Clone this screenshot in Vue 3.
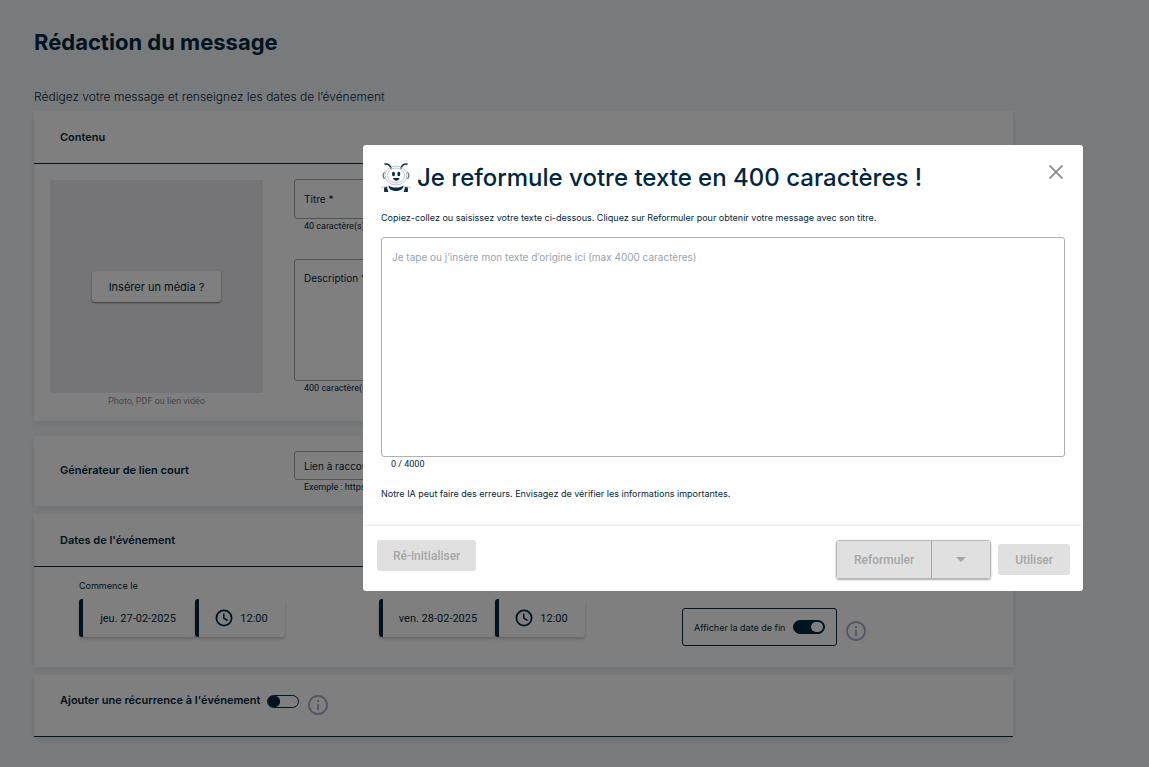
<script setup>
import { ref } from 'vue'

const titre = ref('')
const description = ref('')
const lien = ref('')
const origine = ref('')
const afficherFin = ref(true)
const recurrence = ref(false)
const dates = [
  { id: 'debut', label: 'Commence le', jour: 'jeu. 27-02-2025', heure: '12:00' },
  { id: 'fin', label: '', jour: 'ven. 28-02-2025', heure: '12:00' },
]
</script>

<template>
  <div class="screen">
    <main class="page">
      <h1>Rédaction du message</h1>
      <p class="intro">Rédigez votre message et renseignez les dates de l’événement</p>

      <section class="card content-card">
        <h2 class="card-head">Contenu</h2>
        <div class="content-body">
          <div class="media">
            <div class="media-box">
              <button type="button" class="media-btn">Insérer un média ?</button>
            </div>
            <small>Photo, PDF ou lien vidéo</small>
          </div>
          <div class="fields">
            <div class="field-group">
              <div class="field title-field">
                <label for="titre">Titre *</label>
                <input id="titre" v-model="titre" type="text" />
              </div>
              <span class="hint">40 caractère(s) restant(s)</span>
            </div>
            <div class="field-group">
              <div class="field desc-field">
                <label for="description">Description *</label>
                <textarea id="description" v-model="description"></textarea>
              </div>
              <span class="hint">400 caractère(s) restant(s)</span>
            </div>
          </div>
        </div>
      </section>

      <section class="card link-card">
        <h2>Générateur de lien court</h2>
        <div class="field-group">
          <div class="field link-field">
            <label for="lien">Lien à raccourcir</label>
            <input id="lien" v-model="lien" type="text" />
          </div>
          <span class="hint">Exemple : https://</span>
        </div>
      </section>

      <section class="card dates-card">
        <h2 class="card-head">Dates de l'événement</h2>
        <div class="dates-body">
          <div class="dates">
            <div v-for="d in dates" :key="d.id" class="date">
              <span class="date-label">{{ d.label }}</span>
              <div class="pickers">
                <button type="button" class="picker day">{{ d.jour }}</button>
                <button type="button" class="picker hour">
                  <svg width="20" height="20" viewBox="0 0 20 20" fill="none" stroke="currentColor" stroke-width="1.8">
                    <circle cx="10" cy="10" r="7.6" />
                    <path d="M9.8 5.5V10.2L13.6 12.5" stroke-width="1.5" />
                  </svg>
                  {{ d.heure }}
                </button>
              </div>
            </div>
          </div>
          <div class="end-option">
            <label class="end-box">
              Afficher la date de fin
              <input v-model="afficherFin" class="switch" type="checkbox" />
            </label>
            <svg class="info" width="24" height="24" viewBox="0 0 24 24" fill="currentColor">
              <path d="M11 7h2v2h-2zm0 4h2v6h-2zm1-9C6.480 2 2 6.480 2 12s4.480 10 10 10 10-4.480 10-10S17.520 2 12 2zm0 18c-4.410 0-8-3.590-8-8s3.590-8 8-8 8 3.590 8 8-3.590 8-8 8z" />
            </svg>
          </div>
        </div>
      </section>

      <section class="card recur-card">
        <h2><label for="recurrence">Ajouter une récurrence à l'événement</label></h2>
        <input id="recurrence" v-model="recurrence" class="switch" type="checkbox" />
        <svg class="info" width="24" height="24" viewBox="0 0 24 24" fill="currentColor">
          <path d="M11 7h2v2h-2zm0 4h2v6h-2zm1-9C6.480 2 2 6.480 2 12s4.480 10 10 10 10-4.480 10-10S17.520 2 12 2zm0 18c-4.410 0-8-3.590-8-8s3.590-8 8-8 8 3.590 8 8-3.590 8-8 8z" />
        </svg>
      </section>
    </main>

    <div class="overlay">
      <div class="dialog" role="dialog" aria-modal="true" aria-labelledby="dialog-title">
        <div class="dialog-body">
          <header>
            <svg class="bee" width="30" height="32" viewBox="0 0 30 32" fill="none">
              <g stroke="#0b2b45" stroke-width="1.5" stroke-linecap="round">
                <path d="M4 2c3-.3 5 1 6 4" />
                <path d="M26 2c-3-.3-5 1-6 4" />
              </g>
              <g stroke="#a9b4be" stroke-width=".8">
                <ellipse cx="15" cy="13.500" rx="11" ry="9.500" />
                <ellipse cx="15" cy="13.500" rx="8.500" ry="7.500" fill="#fff" />
                <path d="M0 26c2-1.500 5-1.500 7-1M30 26c-2-1.500-5-1.500-7-1" />
              </g>
              <path d="M3.500 10c-1.500 2-1.500 5 0 7M26.500 10c1.500 2 1.500 5 0 7" stroke="#5c6f80" stroke-width="1.200" />
              <g fill="#0b2b45">
                <ellipse cx="12.500" cy="12" rx="1.500" ry="2.300" />
                <ellipse cx="17.800" cy="12" rx="1.500" ry="2.300" />
                <path d="M12 16h6.500c-.5 2-1.700 2.700-3.200 2.700S12.500 18 12 16z" />
                <path d="M7.500 23.500c2.500 1.500 4 2 7.500 2s5-.5 7.500-2c.3 3-3 5.500-7.500 5.500s-7.800-2.500-7.500-5.500z" />
                <path d="M3 25.500l3-.6 1.300 5.100H3.200zM27 25.500l-3-.6-1.300 5.100h4.100z" />
              </g>
            </svg>
            <h2 id="dialog-title">Je reformule votre texte en 400 caractères !</h2>
            <button type="button" class="close" aria-label="Fermer">
              <svg width="14" height="14" viewBox="0 0 14 14" stroke="currentColor" stroke-width="1.800">
                <path d="M.6.600 13.400 13.400M13.400.600.600 13.400" />
              </svg>
            </button>
          </header>
          <label class="lead" for="origine">Copiez-collez ou saisissez votre texte ci-dessous. Cliquez sur Reformuler pour obtenir votre message avec son titre.</label>
          <textarea id="origine" v-model="origine" class="source" maxlength="4000" placeholder="Je tape ou j’insère mon texte d’origine ici (max 4000 caractères)"></textarea>
          <span class="hint">{{ origine.length }} / 4000</span>
          <p class="notice">Notre IA peut faire des erreurs. Envisagez de vérifier les informations importantes.</p>
        </div>
        <footer>
          <button type="button" class="btn" disabled>Ré-initialiser</button>
          <div class="actions">
            <div class="split">
              <button type="button" class="main" disabled>Reformuler</button>
              <button type="button" class="more" disabled aria-label="Plus d’options">
                <svg width="10" height="5" viewBox="0 0 10 5" fill="currentColor"><path d="M0 0h10L5 5z" /></svg>
              </button>
            </div>
            <button type="button" class="btn" disabled>Utiliser</button>
          </div>
        </footer>
      </div>
    </div>
  </div>
</template>

<style>
body {
  background: #f2f5f9;
}
</style>

<style scoped>
* {
  box-sizing: border-box;
}
.screen {
  min-height: 100vh;
  background: #f2f5f9;
  color: #002640;
  font-family: Inter, "Liberation Sans", sans-serif;
  font-size: 9px;
}
h1, h2, p {
  margin: 0;
}
button, input, textarea {
  font-family: inherit;
  font-size: inherit;
  color: inherit;
}
.page {
  padding: 26px 136px 30px 34px;
}
h1 {
  font-size: 22px;
  line-height: 32px;
  font-weight: 700;
}
.intro {
  margin: 29px 0 4px;
  font-size: 12px;
  line-height: 20px;
  font-weight: 300;
}
.card {
  margin-bottom: 8px;
  background: #fff;
  box-shadow: 0 3px 6px rgba(0, 0, 0, .08);
}
.card h2 {
  font-size: 11px;
  line-height: 20px;
  font-weight: 600;
}
.card .card-head {
  padding: 16px 26px;
  border-bottom: 1px solid #002640;
}
.content-card {
  margin-bottom: 15px;
}
.content-body {
  display: flex;
  gap: 31px;
  padding: 15px 16px 12px;
}
.media {
  width: 213px;
  padding-top: 1px;
  text-align: center;
}
.media-box {
  display: flex;
  align-items: center;
  justify-content: center;
  height: 213px;
  background: #ebebee;
  border-radius: 2px;
}
.media-btn {
  height: 31px;
  padding: 0 17px;
  border: 0;
  border-radius: 3px;
  background: #fff;
  box-shadow: 0 1px 2px rgba(0, 0, 0, .5);
  font-size: 11px;
}
.media small {
  display: block;
  font: 9px/16px Roboto, sans-serif;
  color: #8a8d99;
}
.fields {
  flex: 1;
  display: flex;
  flex-direction: column;
  gap: 26px;
}
.field {
  display: flex;
  padding: 0 9px;
  border: 1px solid #a5a5a5;
  border-radius: 3px;
  font-size: 10px;
}
.field label {
  line-height: 16px;
}
.field input, .field textarea {
  flex: 1;
  min-width: 0;
  padding: 0;
  border: 0;
  outline: 0;
  resize: none;
  background: none;
}
.title-field {
  height: 40px;
  align-items: center;
}
.desc-field {
  height: 122px;
  flex-direction: column;
  padding: 10px 9px;
}
.hint {
  display: block;
  padding-left: 10px;
  font: 9px/14px Roboto, sans-serif;
}
.link-card {
  display: flex;
  padding: 15px 16px 12px 26px;
}
.link-card h2 {
  width: 234px;
  margin-top: 9px;
}
.link-card .field-group {
  flex: 1;
}
.link-field {
  height: 29px;
  align-items: center;
}
.dates-body {
  display: flex;
  gap: 97px;
  padding: 11px 45px 21px;
}
.dates {
  display: flex;
  gap: 94px;
  min-height: 68px;
}
.date {
  width: 206px;
}
.date-label {
  display: block;
  height: 21px;
  line-height: 16px;
}
.pickers {
  display: flex;
}
.picker {
  display: flex;
  align-items: center;
  justify-content: center;
  gap: 6px;
  height: 38px;
  padding: 0 8px 0 6px;
  border: 0;
  border-left: 4px solid #002640;
  border-radius: 3px;
  background: #fff;
  box-shadow: 0 2px 3px rgba(0, 0, 0, .2);
  font: 11px Roboto, sans-serif;
}
.day {
  width: 116px;
}
.hour {
  width: 90px;
}
.end-option {
  display: flex;
  align-items: center;
  align-self: flex-end;
  gap: 7px;
}
.end-box {
  display: flex;
  align-items: center;
  gap: 8px;
  height: 38px;
  padding: 0 11px;
  border: 1px solid #002640;
  border-radius: 3px;
}
.switch {
  appearance: none;
  display: flex;
  align-items: center;
  width: 32px;
  height: 13px;
  margin: 0;
  border: 1px solid #002640;
  border-radius: 7px;
}
.switch::before {
  content: "";
  width: 12px;
  height: 11px;
  border-radius: 5px;
  background: #002640;
}
.switch:checked {
  justify-content: flex-end;
  height: 14px;
  padding-right: 1px;
  background: #002640;
}
.switch:checked::before {
  height: 10px;
  background: #fff;
}
.info {
  color: #a9adc6;
}
.end-option .info {
  margin-top: 8px;
}
.recur-card {
  display: flex;
  gap: 7px;
  padding: 15px 26px;
  height: 62px;
  border-bottom: 1px solid #002640;
}
.recur-card .switch {
  margin-top: 5px;
}
.recur-card .info {
  margin-top: 3px;
}
.overlay {
  position: fixed;
  inset: 0;
  display: flex;
  align-items: flex-start;
  justify-content: flex-end;
  padding: 145px 66px 0 0;
  background: rgba(0, 0, 0, .5);
}
.dialog {
  width: 720px;
  max-width: 90vw;
  background: #fff;
  border-radius: 3px;
}
.dialog-body {
  padding: 17px 18px 24px;
}
header {
  display: flex;
  gap: 6px;
}
header h2 {
  flex: 1;
  font-size: 24px;
  line-height: 32px;
  font-weight: 500;
}
.close {
  width: 18px;
  height: 18px;
  padding: 0;
  margin-top: 1px;
  border: 0;
  background: none;
  color: #8c8c8c;
}
.close svg {
  display: block;
  margin: auto;
}
.lead {
  display: block;
  margin: 16px 0 11px;
  line-height: 16px;
}
.source {
  display: block;
  width: 100%;
  height: 220px;
  padding: 11px 10px;
  border: 1px solid #b0b0b0;
  border-radius: 3px;
  outline: 0;
  resize: none;
  font-size: 10px;
  line-height: 16px;
}
.source::placeholder {
  color: #94a3b1;
  opacity: 1;
}
.notice {
  margin-top: 15px;
  line-height: 16px;
}
footer {
  display: flex;
  align-items: flex-start;
  justify-content: space-between;
  padding: 14px 13px 12px 14px;
  box-shadow: 0 -1px 2px rgba(0, 0, 0, .1);
}
.actions {
  display: flex;
  align-items: center;
  gap: 7px;
}
.btn, .split button {
  border: 0;
  background: #e0e0e0;
  color: #a6a6a6;
  font: 500 12px Roboto, sans-serif;
}
.btn {
  height: 31px;
  padding: 0 17px;
  border-radius: 3px;
}
.btn:first-child {
  padding: 0 16px;
}
.split {
  display: flex;
  height: 39px;
  border: 1px solid #b8b8b8;
  border-radius: 3px;
  box-shadow: 0 1px 2px rgba(0, 0, 0, .35);
}
.split .main {
  padding: 0 17px;
}
.split .more {
  display: flex;
  align-items: center;
  justify-content: center;
  width: 59px;
  padding: 0;
  border-left: 1px solid #a6a6a6;
}
</style>
